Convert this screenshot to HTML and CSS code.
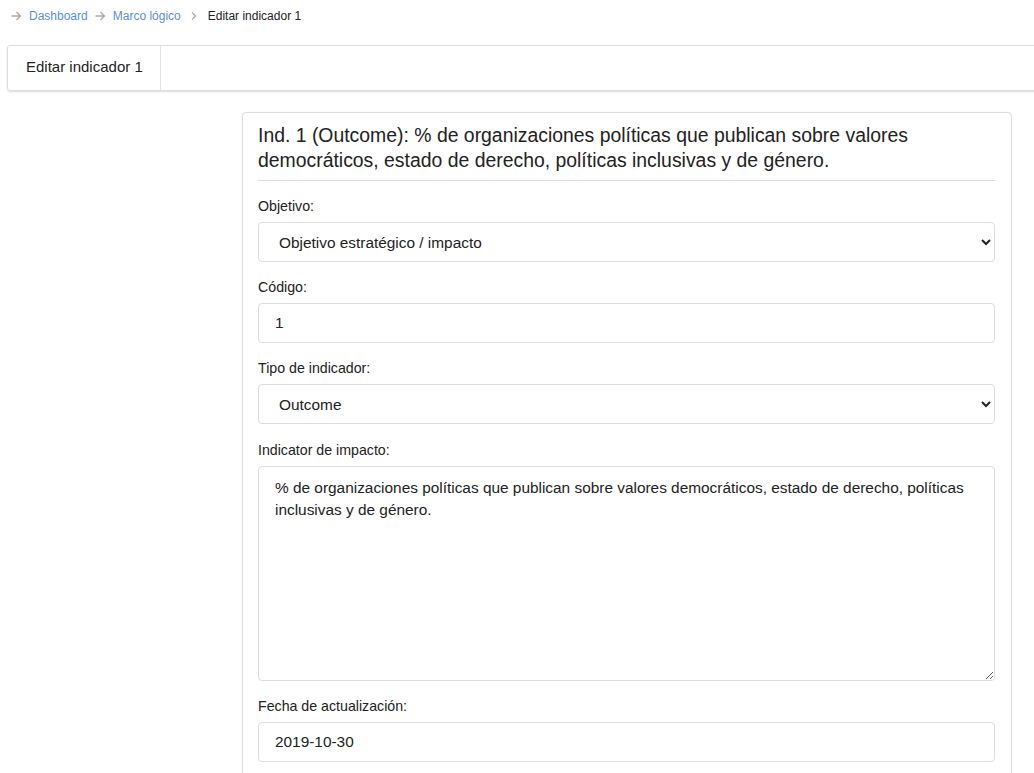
FILE: index.html
```html
<!DOCTYPE html>
<html lang="es">
<head>
<meta charset="utf-8">
<title>Editar indicador 1</title>
<link rel="stylesheet" href="styles.css">
</head>
<body>
<nav class="breadcrumb">
  <span class="sep">
    <svg width="11" height="10" viewBox="0 0 11 10"><path d="M0.5 5 H9.5 M5.5 1 L9.5 5 L5.5 9" fill="none" stroke="#aaa" stroke-width="1.3"/></svg>
  </span>
  <a href="#" class="crumb">Dashboard</a>
  <span class="sep">
    <svg width="11" height="10" viewBox="0 0 11 10"><path d="M0.5 5 H9.5 M5.5 1 L9.5 5 L5.5 9" fill="none" stroke="#aaa" stroke-width="1.3"/></svg>
  </span>
  <a href="#" class="crumb">Marco lógico</a>
  <span class="sep chev">
    <svg width="8" height="10" viewBox="0 0 8 10"><path d="M2 1.5 L5.5 5 L2 8.5" fill="none" stroke="#aaa" stroke-width="1.4"/></svg>
  </span>
  <span class="current">Editar indicador 1</span>
</nav>

<div class="tabbar">
  <div class="tab">Editar indicador 1</div>
</div>

<div class="layout">
  <div class="side"></div>
  <section class="card">
    <h2 class="card-title">Ind. 1 (Outcome): % de organizaciones políticas que publican sobre valores democráticos, estado de derecho, políticas inclusivas y de género.</h2>
    <form class="form">
      <div class="group">
        <label class="label">Objetivo:</label>
        <select class="control select">
          <option>Objetivo estratégico / impacto</option>
        </select>
      </div>
      <div class="group">
        <label class="label">Código:</label>
        <input class="control input" type="text" value="1">
      </div>
      <div class="group">
        <label class="label">Tipo de indicador:</label>
        <select class="control select">
          <option>Outcome</option>
        </select>
      </div>
      <div class="group group-wide">
        <label class="label">Indicator de impacto:</label>
        <textarea class="control textarea">% de organizaciones políticas que publican sobre valores democráticos, estado de derecho, políticas inclusivas y de género.</textarea>
      </div>
      <div class="group">
        <label class="label">Fecha de actualización:</label>
        <input class="control input" type="text" value="2019-10-30">
      </div>
    </form>
  </section>
</div>
</body>
</html>
```

FILE: styles.css
```css
html, body {
  margin: 0;
  padding: 0;
  overflow: hidden;
  background: #fff;
  font-family: "Liberation Sans", Arial, sans-serif;
  color: #222;
}

.breadcrumb {
  display: flex;
  align-items: center;
  height: 32px;
  padding-left: 11px;
  font-size: 12px;
  gap: 7px;
}

.sep {
  display: flex;
  align-items: center;
}
.chev { margin: 0 3px 0 2px; }

.crumb {
  color: #5b8ed8;
  text-decoration: none;
}

.current {
  color: #222;
}

.tabbar {
  margin: 13px -20px 0 7px;
  height: 44px;
  border: 1px solid #ddd;
  border-radius: 3px;
  box-shadow: 0 1px 2px rgba(0,0,0,0.15);
  display: flex;
}

.tab {
  padding: 0 17px 3px 18px;
  white-space: nowrap;
  border-right: 1px solid #e2e2e2;
  display: flex;
  align-items: center;
  font-size: 15px;
  color: #222;
}

.layout {
  display: flex;
  margin-top: 21px;
}

.side {
  width: 242px;
  flex: none;
}

.card {
  width: 737px;
  border: 1px solid #ddd;
  border-radius: 4px;
  padding: 10px 16px 20px 15px;
  box-shadow: 0 0 2px rgba(0,0,0,0.05);
}

.card-title {
  margin: 0;
  font-size: 19.4px;
  font-weight: normal;
  line-height: 25px;
  color: #222;
  padding-bottom: 7px;
  border-bottom: 1px solid #ddd;
}

.form {
  padding-top: 15px;
  display: flex;
  flex-direction: column;
  gap: 15px;
}

.group {
  display: flex;
  flex-direction: column;
  gap: 6px;
}

.group-wide {
  padding-top: 1px;
}

.label {
  font-size: 14.2px;
  line-height: 20px;
  color: #222;
}

.control {
  box-sizing: border-box;
  width: 100%;
  border: 1px solid #ddd;
  border-radius: 4px;
  background: #fff;
  font-family: "Liberation Sans", Arial, sans-serif;
  font-size: 15.4px;
  color: #222;
  margin: 0;
}

.select {
  height: 40px;
  padding: 0 8px 0 16px;
}

.input {
  height: 40px;
  padding: 0 16px;
}

.textarea {
  height: 215px;
  padding: 10px 16px;
  line-height: 22px;
  resize: vertical;
}
```
